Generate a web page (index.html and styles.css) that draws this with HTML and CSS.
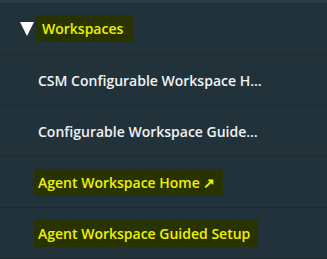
FILE: index.html
```html
<!DOCTYPE html>
<html lang="en">
<head>
    <meta charset="UTF-8">
    <title>Workspaces</title>
    <link rel="stylesheet" href="styles.css">
</head>
<body>

    <!-- Nav group -->
    <div class="nav-group">
        <div class="group-head">
            <span class="caret"></span>
            <span class="mark">Workspaces</span>
        </div>
        <div class="nav-item"><span class="label">CSM Configurable Workspace Home</span></div>
        <div class="nav-item"><span class="label">Configurable Workspace Guided Setup</span></div>
        <div class="nav-item"><span class="label mark">Agent Workspace Home &#x2197;</span></div>
        <div class="nav-item"><span class="label mark">Agent Workspace Guided Setup</span></div>
    </div>

</body>
</html>
```

FILE: styles.css
```css
body {
    margin: 0;
    padding: 0;
    background-color: #22323a;
    font-family: 'Open Sans', 'Liberation Sans', sans-serif;
    font-weight: 600;
    font-size: 14px;
    color: #f0f3f4;
}
.nav-group {
    border-top: 3px solid #2a3c44;
}
.group-head {
    display: flex;
    align-items: center;
    height: 51px;
    padding-left: 20px;
    border-bottom: 1px solid #1c2b31;
}
.caret {
    width: 0;
    height: 0;
    border-left: 7px solid transparent;
    border-right: 7px solid transparent;
    border-top: 14px solid #ffffff;
    margin-right: 2px;
}
.mark {
    background-color: #283300;
    color: #eef200;
    padding: 4px 10px 4px 6px;
}
.nav-item {
    display: flex;
    align-items: center;
    height: 50px;
    padding-left: 38px;
    border-bottom: 1px solid #1c2b31;
}
.label {
    max-width: 228px;
    white-space: nowrap;
    overflow: hidden;
    text-overflow: ellipsis;
}
.label.mark {
    max-width: none;
    margin-left: -4px;
    padding: 4px 8px 4px 4px;
}
```
